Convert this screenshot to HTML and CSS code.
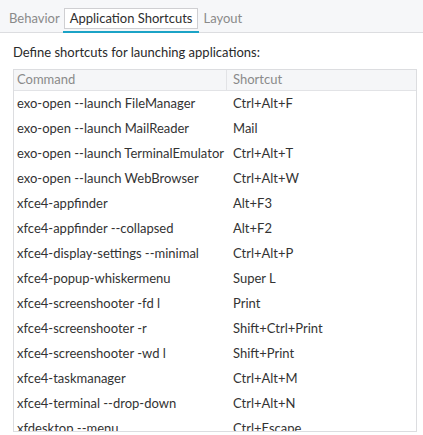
FILE: index.html
```html
<!DOCTYPE html>
<html>
<head>
<meta charset="utf-8">
<link rel="stylesheet" href="styles.css">
</head>
<body>
<div class="tabs">
  <div class="tab">Behavior</div>
  <div class="tab active">Application Shortcuts</div>
  <div class="tab">Layout</div>
</div>
<div class="content">
  <div class="label">Define shortcuts for launching applications:</div>
  <div class="frame">
    <div class="row head">
      <div class="c1">Command</div>
      <div class="c2">Shortcut</div>
    </div>
    <div class="row"><div class="c1">exo-open --launch FileManager</div><div class="c2">Ctrl+Alt+F</div></div>
    <div class="row"><div class="c1">exo-open --launch MailReader</div><div class="c2">Mail</div></div>
    <div class="row"><div class="c1">exo-open --launch TerminalEmulator</div><div class="c2">Ctrl+Alt+T</div></div>
    <div class="row"><div class="c1">exo-open --launch WebBrowser</div><div class="c2">Ctrl+Alt+W</div></div>
    <div class="row"><div class="c1">xfce4-appfinder</div><div class="c2">Alt+F3</div></div>
    <div class="row"><div class="c1">xfce4-appfinder --collapsed</div><div class="c2">Alt+F2</div></div>
    <div class="row"><div class="c1">xfce4-display-settings --minimal</div><div class="c2">Ctrl+Alt+P</div></div>
    <div class="row"><div class="c1">xfce4-popup-whiskermenu</div><div class="c2">Super L</div></div>
    <div class="row"><div class="c1">xfce4-screenshooter -fd l</div><div class="c2">Print</div></div>
    <div class="row"><div class="c1">xfce4-screenshooter -r</div><div class="c2">Shift+Ctrl+Print</div></div>
    <div class="row"><div class="c1">xfce4-screenshooter -wd l</div><div class="c2">Shift+Print</div></div>
    <div class="row"><div class="c1">xfce4-taskmanager</div><div class="c2">Ctrl+Alt+M</div></div>
    <div class="row"><div class="c1">xfce4-terminal --drop-down</div><div class="c2">Ctrl+Alt+N</div></div>
    <div class="row"><div class="c1">xfdesktop --menu</div><div class="c2">Ctrl+Escape</div></div>
  </div>
</div>
</body>
</html>
```
FILE: styles.css
```css
html, body {
  margin: 0;
  padding: 0;
  background: #ffffff;
  font-family: Lato, "Open Sans", sans-serif;
  font-size: 13px;
  color: #333333;
  overflow: hidden;
  height: 435px;
}
.tabs {
  display: flex;
  align-items: flex-start;
  height: 32px;
  background: #f6f7f9;
  border-bottom: 1px solid #dcdde0;
  padding-left: 3px;
}
.tab {
  margin-top: 8px;
  height: 21px;
  line-height: 19px;
  padding: 0 5px;
  color: #8a8a8a;
  box-sizing: border-box;
  border: 1px solid transparent;
  position: relative;
}
.tab.active {
  color: #2e2e2e;
  border-color: #cfcfd2;
  background: #ffffff;
  margin-left: -2px;
  margin-right: -1px;
}
.tab.active::after {
  content: "";
  position: absolute;
  left: -2px;
  right: -2px;
  top: 22px;
  height: 2px;
  background: #1ba3c6;
}
.content {
  padding: 10px 6px 0 13px;
}
.label {
  height: 26px;
  line-height: 18px;
  color: #2a2a2a;
}
.frame {
  width: 404px;
  height: 363px;
  box-sizing: border-box;
  border: 1px solid #dcdde0;
  overflow: hidden;
}
.row {
  display: flex;
  height: 25px;
  line-height: 25px;
  white-space: nowrap;
}
.row.head {
  height: 20px;
  line-height: 19px;
  background: #f5f6f8;
  border-bottom: 1px solid #e2e3e6;
  color: #8a8a8a;
}
.c1 {
  width: 213px;
  padding-left: 3px;
  box-sizing: border-box;
}
.head .c1 {
  border-right: 1px solid #e2e3e6;
}
.c2 {
  padding-left: 6px;
}
```
